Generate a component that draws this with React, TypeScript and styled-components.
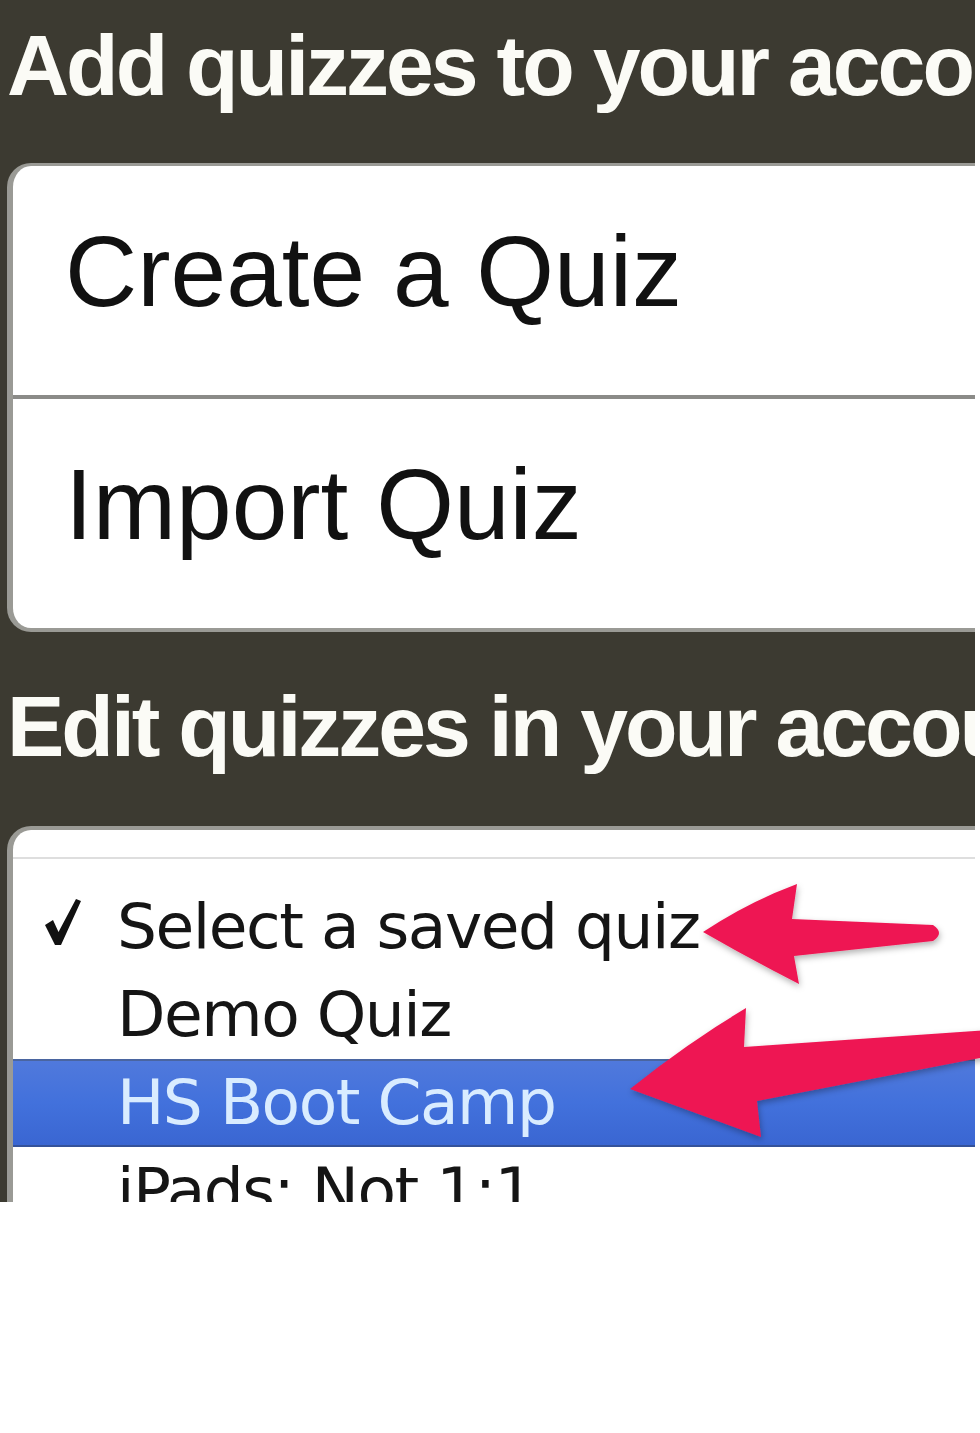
import styled, { createGlobalStyle } from 'styled-components';

const GlobalStyle = createGlobalStyle`
  *, *::before, *::after {
    box-sizing: border-box;
  }
  html, body {
    margin: 0;
    background: #ffffff;
  }
`;

const Page = styled.div`
  position: relative;
  width: 980px;
  height: 1433px;
  background: #ffffff;
  overflow: hidden;
`;

const Panel = styled.div`
  width: 975px;
  height: 1202px;
  padding-top: 15px;
  background: #3c3a31;
  overflow: hidden;
`;

const Heading = styled.h2<{ $gap: number }>`
  margin: ${({ $gap }) => $gap}px 0 0;
  padding-left: 7px;
  font: bold 86px/100px 'Liberation Sans', Arial, sans-serif;
  letter-spacing: -3px;
  color: #fbfbf6;
  white-space: nowrap;
`;

const Card = styled.div<{ $gap: number }>`
  margin: ${({ $gap }) => $gap}px 0 0 7px;
  width: 1000px;
  background: #ffffff;
  border-style: solid;
  border-color: #9a9a95;
  border-width: 3px 0 4px 6px;
  border-radius: 24px 0 0 24px;
  overflow: hidden;
`;

const ActionRow = styled.div`
  height: 229px;
  padding: 56px 0 0 52px;
  font: 100px/98px 'Liberation Sans', Arial, sans-serif;
  color: #111111;
  white-space: nowrap;
`;

const Divider = styled.div`
  height: 4px;
  background: #8b8b88;
`;

const SelectCard = styled.div`
  margin: 50px 0 0 7px;
  width: 1000px;
  height: 500px;
  padding-top: 27px;
  background: #ffffff;
  border-style: solid;
  border-color: #9a9a95;
  border-width: 4px 0 0 6px;
  border-radius: 24px 0 0 0;
`;

const Menu = styled.div`
  border-top: 2px solid #dedede;
  padding-top: 24px;
`;

const MenuItem = styled.div<{ $active?: boolean }>`
  display: flex;
  align-items: center;
  height: 88px;
  font: 63px/88px 'DejaVu Sans', Verdana, sans-serif;
  letter-spacing: -1.5px;
  white-space: nowrap;
  color: ${({ $active }) => ($active ? '#d9ecff' : '#151515')};
  background: ${({ $active }) =>
    $active ? 'linear-gradient(180deg, #5079dc 0%, #4271dc 50%, #3a66d2 100%)' : 'transparent'};
  border-top: 2px solid ${({ $active }) => ($active ? '#4a65a0' : 'transparent')};
  border-bottom: 2px solid ${({ $active }) => ($active ? '#34529a' : 'transparent')};
`;

const CheckSlot = styled.span`
  display: flex;
  width: 104px;
  padding-left: 32px;
  margin-top: -10px;
`;

const Arrows = styled.svg`
  position: absolute;
  left: 0;
  top: 0;
  pointer-events: none;
`;

const quizzes = [
  { label: 'Select a saved quiz', checked: true },
  { label: 'Demo Quiz' },
  { label: 'HS Boot Camp', active: true },
  { label: 'iPads: Not 1:1' },
];

const Check = () => (
  <svg width="36" height="46" viewBox="0 0 36 46">
    <polygon points="0,26 8,21 13.5,33 31,0 36,2 16,46 10,46" fill="#111" />
  </svg>
);

export default function App() {
  return (
    <>
      <GlobalStyle />
      <Page>
        <Panel>
          <Heading $gap={0}>Add quizzes to your account</Heading>
          <Card $gap={48}>
            <ActionRow>Create a Quiz</ActionRow>
            <Divider />
            <ActionRow>Import Quiz</ActionRow>
          </Card>
          <Heading $gap={44}>Edit quizzes in your account</Heading>
          <SelectCard>
            <Menu>
              {quizzes.map((q) => (
                <MenuItem key={q.label} $active={q.active}>
                  <CheckSlot>{q.checked && <Check />}</CheckSlot>
                  {q.label}
                </MenuItem>
              ))}
            </Menu>
          </SelectCard>
        </Panel>
        {/* callout arrows pointing at the menu */}
        <Arrows width="980" height="1433" viewBox="0 0 980 1433">
          <defs>
            <filter id="arrowShadow" x="-10%" y="-20%" width="130%" height="150%">
              <feDropShadow dx="1" dy="3" stdDeviation="3" floodColor="#000" floodOpacity="0.3" />
            </filter>
          </defs>
          <g fill="#ee1652" filter="url(#arrowShadow)">
            <path d="M703 932 Q748 902 797 884 L792 919 L933 925 Q945 933 933 941 L794 956 L799 984 Q748 958 703 932 Z" />
            <path d="M630 1089 Q686 1044 746 1008 L744 1047 L990 1030 L990 1056 L757 1101 L761 1137 Q693 1112 630 1089 Z" />
          </g>
        </Arrows>
      </Page>
    </>
  );
}
